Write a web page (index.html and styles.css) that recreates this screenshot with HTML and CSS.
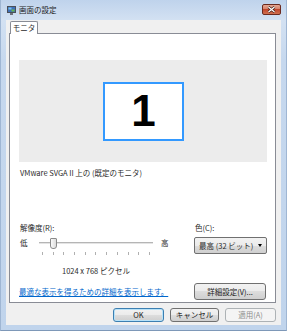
FILE: index.html
```html
<!DOCTYPE html>
<html>

<head>
    <title>画面の設定</title>
    <meta charset="utf-8">
    <link rel="stylesheet" href="styles.css">
</head>

<body>
    <div class="window">
        <div class="titlebar">
            <svg class="app-icon" width="9" height="9" viewBox="0 0 9 9">
                <rect x="0.5" y="0.5" width="8" height="6" fill="#3f6fb8" stroke="#4a4f58" stroke-width="1"/>
                <rect x="1.5" y="1.5" width="3" height="2" fill="#7cc4ee"/>
                <rect x="4.5" y="3.5" width="3" height="2" fill="#69b84a"/>
                <rect x="3" y="7" width="3" height="2" fill="#6d737c"/>
            </svg>
            <span class="title">画面の設定</span>
            <span class="close">
                <svg width="9" height="7" viewBox="0 0 9 7">
                    <path d="M1.5 1 L7.5 6 M7.5 1 L1.5 6" stroke="#3a1a14" stroke-width="2.6"/>
                    <path d="M1.5 1 L7.5 6 M7.5 1 L1.5 6" stroke="#ffffff" stroke-width="1.3"/>
                </svg>
            </span>
        </div>
        <div class="client">
            <div class="tabs">
                <div class="tab">モニタ</div>
            </div>
            <div class="panel">
                <div class="preview">
                    <div class="monitor">1</div>
                </div>
                <div class="device">VMware SVGA II 上の (既定のモニタ)</div>
                <div class="settings">
                    <div class="resolution">
                        <div class="label">解像度(R):</div>
                        <div class="slider-row">
                            <span class="lo">低</span>
                            <div class="track">
                                <div class="rail">
                                    <div class="thumb"></div>
                                </div>
                                <div class="ticks">
                                    <span></span><span></span><span></span><span></span>
                                    <span></span><span></span><span></span><span></span>
                                    <span></span><span></span><span></span>
                                </div>
                            </div>
                            <span class="hi">高</span>
                        </div>
                        <div class="res-value">1024 x 768 ピクセル</div>
                    </div>
                    <div class="color">
                        <div class="label">色(C):</div>
                        <div class="select">
                            <span>最高 (32 ビット)</span>
                            <span class="arrow"></span>
                        </div>
                    </div>
                </div>
                <div class="panel-footer">
                    <a class="link" href="#">最適な表示を得るための詳細を表示します。</a>
                    <div class="btn advanced">詳細設定(V)...</div>
                </div>
            </div>
            <div class="buttons">
                <div class="btn default ok">OK</div>
                <div class="btn cancel">キャンセル</div>
                <div class="btn disabled apply">適用(A)</div>
            </div>
        </div>
    </div>
</body>

</html>
```

FILE: styles.css
```css
* {
    box-sizing: border-box;
}

body {
    margin: 0;
    font-family: "Noto Sans CJK JP", sans-serif;
    font-size: 7.5px;
    line-height: 10px;
    color: #2b2b2b;
}

.window {
    width: 287px;
    height: 331px;
    padding: 0 5px 6px 5px;
    background: linear-gradient(to bottom, #bfd3ec 0px, #d3e1f2 20px, #c6d8ee 60px, #c0d4ec 100%);
    border-left: 1px solid #9fb6d3;
    border-right: 1px solid #9fb6d3;
    border-bottom: 1px solid #7e98b8;
}

.titlebar {
    height: 20px;
    display: flex;
    align-items: center;
    padding-left: 1px;
}

.app-icon {
    display: block;
    margin-top: 1px;
}

.title {
    margin-left: 3px;
    color: #1c1c1c;
    font-size: 7.5px;
}

.close {
    margin-left: auto;
    width: 19px;
    height: 11px;
    display: flex;
    align-items: center;
    justify-content: center;
    border: 1px solid #6b2a1f;
    border-radius: 2px;
    background: linear-gradient(to bottom, #e5a793 0%, #d6836c 45%, #c2472d 50%, #d0704f 100%);
    margin-top: -1px;
}

.close svg {
    display: block;
}

.client {
    height: 305px;
    background: #f0f0f0;
    padding: 1px 5px 0 3px;
}

.tabs {
    display: flex;
    padding-left: 1px;
}

.tab {
    position: relative;
    width: 28px;
    height: 13px;
    margin-bottom: -1px;
    padding-top: 1px;
    text-align: center;
    background: #fff;
    border: 1px solid #898c95;
    border-bottom: none;
    border-radius: 2px 2px 0 0;
}

.panel {
    height: 270px;
    background: #fff;
    border: 1px solid #898c95;
    padding: 26px 8px 2px 9px;
}

.preview {
    height: 102px;
    background: #ececec;
    display: flex;
    align-items: center;
    justify-content: center;
}

.monitor {
    width: 81px;
    height: 59px;
    margin-left: 1px;
    background: #fff;
    border: 2px solid #3399ff;
    display: flex;
    align-items: center;
    justify-content: center;
    font-family: "Liberation Sans", Arial, sans-serif;
    font-weight: bold;
    font-size: 44px;
    line-height: 44px;
    color: #000;
}

.device {
    margin-top: 6px;
    padding-left: 1px;
}

.settings {
    margin-top: 45px;
    display: flex;
    justify-content: space-between;
}

.label {
    padding-left: 1px;
}

.slider-row {
    margin-top: 2px;
    display: flex;
    align-items: flex-start;
}

.lo,
.hi {
    line-height: 16px;
}

.lo {
    width: 20px;
    padding-left: 1px;
}

.hi {
    margin-left: 8px;
}

.track {
    width: 114px;
}

.rail {
    height: 16px;
    padding-top: 3px;
    background: linear-gradient(to bottom, transparent 7px, #b5b5b5 7px, #b5b5b5 8px, #e4e4e4 8px, #e4e4e4 9px, transparent 9px);
}

.thumb {
    width: 7px;
    height: 11px;
    margin-left: 11px;
    border: 1px solid #8a8a8a;
    border-radius: 1px 1px 3px 3px;
    background: linear-gradient(to right, #fafafa, #dcdcdc);
}

.ticks {
    margin-top: 1px;
    height: 3px;
    padding: 0 3px;
    display: flex;
    justify-content: space-between;
}

.ticks span {
    width: 1px;
    height: 3px;
    background: #b0b0b0;
}

.res-value {
    margin-top: 11px;
    margin-left: 20px;
    width: 114px;
    text-align: center;
}

.color {
    width: 73px;
}

.select {
    margin-top: 4px;
    height: 17px;
    display: flex;
    align-items: center;
    justify-content: space-between;
    padding: 0 4px 0 4px;
    border: 1px solid #707070;
    border-radius: 2px;
    background: linear-gradient(to bottom, #f2f2f2 0%, #ebebeb 50%, #dddddd 50%, #cfcfcf 100%);
}

.arrow {
    width: 0;
    height: 0;
    border-left: 2.5px solid transparent;
    border-right: 2.5px solid transparent;
    border-top: 3px solid #000;
}

.panel-footer {
    margin-top: 7px;
    display: flex;
    align-items: center;
    justify-content: space-between;
}

.link {
    color: #0066cc;
    text-decoration: underline;
}

.btn {
    display: flex;
    align-items: center;
    justify-content: center;
    border: 1px solid #707070;
    border-radius: 3px;
    background: linear-gradient(to bottom, #f2f2f2 0%, #ebebeb 50%, #dddddd 50%, #cfcfcf 100%);
    color: #1c1c1c;
}

.advanced {
    width: 72px;
    height: 17px;
    margin-right: 1px;
}

.buttons {
    margin-top: 5px;
    display: flex;
    justify-content: flex-end;
    gap: 6px;
}

.buttons .btn {
    height: 14px;
}

.ok {
    width: 51px;
}

.cancel {
    width: 49px;
}

.apply {
    width: 51px;
}

.default {
    border-color: #3c7fb1;
    box-shadow: inset 0 0 0 1px #b8e2f8;
}

.disabled {
    border-color: #adb2b5;
    background: #f4f4f4;
    color: #8d8d8d;
}
```
